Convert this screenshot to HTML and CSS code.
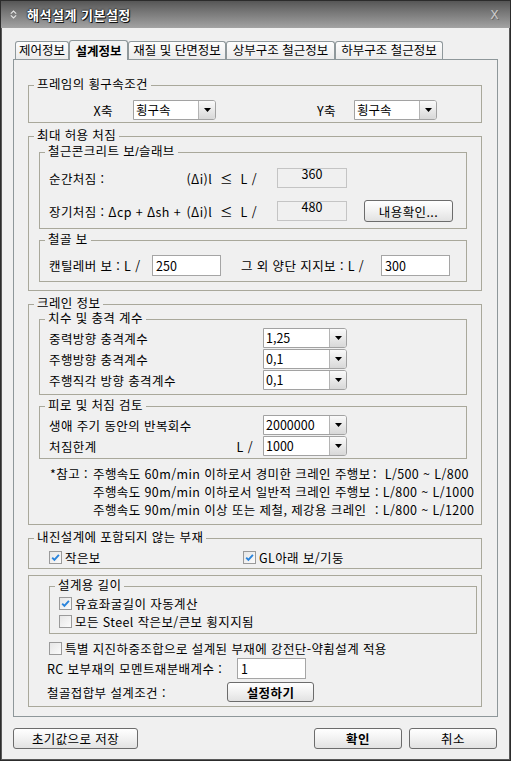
FILE: index.html
```html
<!DOCTYPE html>
<html lang="ko">
<head>
<meta charset="utf-8">
<title>해석설계 기본설정</title>
<link rel="stylesheet" href="styles.css">
</head>
<body>
<div class="window">
  <div class="titlebar">
    <svg class="ticon" width="7" height="9" viewBox="0 0 7 9"><path d="M0.8 3.6 L3.5 1 L6.2 3.6 M0.8 5.4 L3.5 8 L6.2 5.4" fill="none" stroke="#e6e6e6" stroke-width="1.1"/></svg>
    <span class="title">해석설계 기본설정</span>
    <span class="close">X</span>
  </div>
  <div class="client">
    <div class="tabs">
      <div class="tab t1">제어정보</div>
      <div class="tab t2 active">설계정보</div>
      <div class="tab t3">재질 및 단면정보</div>
      <div class="tab t4">상부구조 철근정보</div>
      <div class="tab t5">하부구조 철근정보</div>
    </div>
    <div class="panel">
      <fieldset class="group g1">
        <legend>프레임의 횡구속조건</legend>
        <div class="g1-body">
          <span class="lab-x">X축</span>
          <div class="combo w83"><span class="val">횡구속</span><span class="dd"><svg width="7" height="4" viewBox="0 0 7 4"><polygon points="0,0 7,0 3.5,4" fill="#000"/></svg></span></div>
          <span class="lab-y">Y축</span>
          <div class="combo w83"><span class="val">횡구속</span><span class="dd"><svg width="7" height="4" viewBox="0 0 7 4"><polygon points="0,0 7,0 3.5,4" fill="#000"/></svg></span></div>
        </div>
      </fieldset>

      <fieldset class="group g2">
        <legend>최대 허용 처짐</legend>
        <div class="g2-body">
          <fieldset class="sub rc">
            <legend>철근콘크리트 보/슬래브</legend>
            <div class="rc-body">
              <div class="rc-row r1">
                <span class="rc-label"><span>순간처짐 :</span><span class="frm">(Δi)l&nbsp; ≤ &nbsp;L /</span></span>
                <span class="ro">360</span>
              </div>
              <div class="rc-row r2">
                <span class="rc-label"><span>장기처짐 : Δcp + Δsh +</span><span class="frm">(Δi)l&nbsp; ≤ &nbsp;L /</span></span>
                <span class="ro">480</span>
                <button class="btn b-check">내용확인...</button>
              </div>
            </div>
          </fieldset>
          <fieldset class="sub st">
            <legend>철골 보</legend>
            <div class="st-body">
              <span class="st-l1">캔틸레버 보 : L /</span>
              <span class="edit">250</span>
              <span class="st-l2">그 외 양단 지지보 : L /</span>
              <span class="edit">300</span>
            </div>
          </fieldset>
        </div>
      </fieldset>

      <fieldset class="group g3">
        <legend>크레인 정보</legend>
        <div class="g3-body">
          <fieldset class="sub cr">
            <legend>치수 및 충격 계수</legend>
            <div class="cr-body">
              <div class="crow"><span class="clabel">중력방향 충격계수</span><div class="combo w84"><span class="val">1,25</span><span class="dd"><svg width="7" height="4" viewBox="0 0 7 4"><polygon points="0,0 7,0 3.5,4" fill="#000"/></svg></span></div></div>
              <div class="crow"><span class="clabel">주행방향 충격계수</span><div class="combo w84"><span class="val">0,1</span><span class="dd"><svg width="7" height="4" viewBox="0 0 7 4"><polygon points="0,0 7,0 3.5,4" fill="#000"/></svg></span></div></div>
              <div class="crow"><span class="clabel">주행직각 방향 충격계수</span><div class="combo w84"><span class="val">0,1</span><span class="dd"><svg width="7" height="4" viewBox="0 0 7 4"><polygon points="0,0 7,0 3.5,4" fill="#000"/></svg></span></div></div>
            </div>
          </fieldset>
          <fieldset class="sub fa">
            <legend>피로 및 처짐 검토</legend>
            <div class="fa-body">
              <div class="crow"><span class="clabel">생애 주기 동안의 반복회수</span><div class="combo w84"><span class="val">2000000</span><span class="dd"><svg width="7" height="4" viewBox="0 0 7 4"><polygon points="0,0 7,0 3.5,4" fill="#000"/></svg></span></div></div>
              <div class="crow"><span class="clabel split"><span>처짐한계</span><span>L /</span></span><div class="combo w84"><span class="val">1000</span><span class="dd"><svg width="7" height="4" viewBox="0 0 7 4"><polygon points="0,0 7,0 3.5,4" fill="#000"/></svg></span></div></div>
            </div>
          </fieldset>
          <div class="notes">
            <span>*참고 :</span><span>주행속도 60m/min 이하로서 경미한 크레인 주행보</span><span>:&nbsp;&nbsp;L/500 ~ L/800</span>
            <span></span><span>주행속도 90m/min 이하로서 일반적 크레인 주행보</span><span class="n2">: L/800 ~ L/1000</span>
            <span></span><span>주행속도 90m/min 이상 또는 제철, 제강용 크레인</span><span class="n2">: L/800 ~ L/1200</span>
          </div>
        </div>
      </fieldset>

      <fieldset class="group g4">
        <legend>내진설계에 포함되지 않는 부재</legend>
        <div class="g4-body">
          <span class="ck-item first"><span class="chk"><svg width="11" height="11" viewBox="0 0 11 11"><path d="M2.2 5.6 L4.4 7.9 L8.9 2.8" fill="none" stroke="#2a84dc" stroke-width="1.9"/></svg></span>작은보</span>
          <span class="ck-item"><span class="chk"><svg width="11" height="11" viewBox="0 0 11 11"><path d="M2.2 5.6 L4.4 7.9 L8.9 2.8" fill="none" stroke="#2a84dc" stroke-width="1.9"/></svg></span>GL아래 보/기둥</span>
        </div>
      </fieldset>

      <div class="g5">
        <fieldset class="sub dl">
          <legend>설계용 길이</legend>
          <div class="dl-body">
            <div class="ck-row"><span class="chk"><svg width="11" height="11" viewBox="0 0 11 11"><path d="M2.2 5.6 L4.4 7.9 L8.9 2.8" fill="none" stroke="#2a84dc" stroke-width="1.9"/></svg></span>유효좌굴길이 자동계산</div>
            <div class="ck-row"><span class="chk"></span>모든 Steel 작은보/큰보 횡지지됨</div>
          </div>
        </fieldset>
        <div class="ck-row special"><span class="chk"></span>특별 지진하중조합으로 설계된 부재에 강전단-약휨설계 적용</div>
        <div class="rc2"><span class="rc2-label">RC 보부재의 모멘트재분배계수 :</span><span class="edit">1</span></div>
        <div class="jt"><span class="jt-label">철골접합부 설계조건 :</span><button class="btn b-set">설정하기</button></div>
      </div>
    </div>
    <div class="bottom">
      <button class="btn b-save">초기값으로 저장</button>
      <button class="btn b-ok">확인</button>
      <button class="btn b-cancel">취소</button>
    </div>
  </div>
</div>
</body>
</html>
```

FILE: styles.css
```css
* { box-sizing: border-box; }
html, body { margin: 0; padding: 0; }
body {
  width: 511px;
  height: 761px;
  overflow: hidden;
  background: #f0f0f0;
  font-family: "Noto Sans CJK KR", "Noto Sans", sans-serif;
  font-size: 12.5px;
  letter-spacing: 0.4px;
  color: #000;
}
.window {
  width: 511px;
  height: 761px;
  border: 1px solid #2c2c2c;
  box-shadow: inset 0 0 0 1px #5a5a5a;
  background: #f0f0f0;
}
.titlebar {
  height: 27px;
  display: flex;
  align-items: center;
  padding-left: 9px;
  background: linear-gradient(to bottom, #565656 0%, #6f6f6f 30%, #8c8c8c 70%, #a3a3a3 100%);
}
.ticon { margin-right: 10px; }
.title {
  font-weight: bold;
  font-size: 13px;
  color: #fff;
  text-shadow: 1px 1px 0 #111, 0 0 2px #000, 0 0 1px #000;
  letter-spacing: 0.5px;
}
.close {
  margin-left: auto;
  margin-right: 11px;
  font-family: "Liberation Sans", sans-serif;
  font-size: 12px;
  color: #cfcfcf;
  text-shadow: 1px 1px 0 #666;
}
.client { padding: 0 12px; }

/* tabs */
.tabs {
  display: flex;
  align-items: flex-start;
  height: 19px;
  margin: 12px 0 0 2px;
}
.tab {
  height: 18px;
  margin-top: 1px;
  border: 1px solid #8f989b;
  border-bottom: none;
  border-radius: 3px 3px 0 0;
  background: linear-gradient(#fdfdfd, #ebebeb);
  text-align: center;
  line-height: 16px;
  font-size: 12.5px;
  letter-spacing: 0;
  white-space: nowrap;
}
.tab.active {
  height: 20px;
  margin-top: 0;
  background: #f3f3f3;
  font-weight: bold;
  line-height: 19px;
  position: relative;
  z-index: 1;
}
.t1 { width: 54px; }
.t2 { width: 59px; }
.t3 { width: 98px; }
.t4 { width: 109px; }
.t5 { width: 108px; }

.panel {
  height: 658px;
  border: 1px solid #8e979a;
  padding: 18px 15px 9px 14px;
  background: #f0f0f0;
}

/* group boxes */
fieldset {
  margin: 0;
  padding: 0;
  min-width: 0;
  border: 1px solid #a9a89b;
}
legend {
  margin-left: 5px;
  padding: 0 3px;
  height: 14px;
  line-height: 14px;
  font-family: "Liberation Sans", "Noto Sans CJK KR", sans-serif;
  white-space: nowrap;
}
.group { width: 454px; }
.g2, .g3, .g4 { margin-top: 6px; }
.sub { width: 428px; margin-left: 10px; }

/* combo */
.combo {
  display: flex;
  height: 20px;
  border: 1px solid #a2a2a2;
  border-radius: 0 3px 3px 0;
  background: #fff;
}
.w83 { width: 83px; }
.w84 { width: 84px; }
.combo .val {
  flex: 1;
  padding-left: 2px;
  line-height: 18px;
  letter-spacing: 0;
  white-space: nowrap;
}
.combo .dd {
  width: 17px;
  display: flex;
  align-items: center;
  justify-content: center;
  border-left: 1px solid #b4b4b4;
  border-radius: 0 2px 2px 0;
  background: linear-gradient(#fafafa, #e9e9e9 50%, #d8d8d8);
}

/* group 1 */
.g1-body {
  display: flex;
  align-items: center;
  padding: 8px 0 2px;
}
.lab-x { width: 104px; text-align: right; padding-right: 20px; }
.lab-y { width: 138px; text-align: right; padding-right: 18px; }

/* group 2 */
.g2-body { padding: 2px 0 8px; }
.rc-body { padding: 9px 0 6px 9px; }
.rc-row { display: flex; align-items: center; }
.r1 { height: 20px; }
.r2 { height: 22px; margin-top: 12px; }
.rc-label {
  width: 208px;
  display: flex;
  justify-content: space-between;
  white-space: nowrap;
}
.ro {
  margin-left: 20px;
  width: 70px;
  height: 20px;
  border: 1px solid #c4c4c4;
  background: #f0f0f0;
  text-align: center;
  line-height: 9px;
  letter-spacing: 0;
  padding-top: 0;
}
.st { margin-top: 4px; }
.st-body {
  display: flex;
  align-items: center;
  padding: 8px 0 5px 9px;
}
.st-l1 { width: 103px; padding-right: 8px; white-space: nowrap; }
.st-l2 { width: 160px; padding-left: 20px; white-space: nowrap; }
.edit {
  width: 69px;
  height: 21px;
  border: 1px solid #a5a5a5;
  background: #fff;
  padding-left: 3px;
  line-height: 19px;
  letter-spacing: 0;
}

/* buttons */
.btn {
  font: inherit;
  letter-spacing: inherit;
  color: #000;
  padding: 0;
  border: 1px solid #6c6c6c;
  border-radius: 3px;
  background: linear-gradient(#ffffff, #f3f3f3 45%, #e2e2e2);
  white-space: nowrap;
}
.b-check { margin-left: 17px; width: 89px; height: 22px; }

/* group 3 */
.g3-body { padding: 1px 0 5px; }
.cr-body { padding: 2px 0 4px 9px; }
.fa { margin-top: 4px; }
.fa-body { padding: 2px 0 2px 9px; }
.crow { display: flex; align-items: center; height: 20px; }
.crow + .crow { margin-top: 1px; }
.clabel { width: 214px; white-space: nowrap; }
.clabel.split { display: flex; justify-content: space-between; padding-right: 10px; }
.notes {
  margin-top: 6px;
  padding-left: 21px;
  display: grid;
  grid-template-columns: 43px 280px auto;
  line-height: 18px;
  white-space: nowrap;
}
.notes .n2 { padding-left: 2px; }

/* checkboxes */
.chk {
  width: 13px;
  height: 13px;
  margin-right: 3px;
  border: 1px solid #9a9a9a;
  background: linear-gradient(135deg, #e6e6e6, #fbfbfb);
  display: inline-flex;
  align-items: center;
  justify-content: center;
  flex: none;
}
.ck-item, .ck-row { display: flex; align-items: center; white-space: nowrap; }
.g4-body { display: flex; padding: 4px 0 3px 20px; }
.ck-item { height: 16px; }
.ck-item.first { width: 194px; }

/* group 5 */
.g5 {
  width: 454px;
  margin-top: 6px;
  border: 1px solid #a9a89b;
  padding: 3px 0 4px 10px;
}
.dl-body { padding: 1px 0 3px 9px; }
.ck-row { height: 18px; }
.special { margin: 5px 0 0 10px; }
.rc2 { display: flex; align-items: center; height: 21px; margin: 1px 0 0 8px; }
.rc2-label { width: 190px; white-space: nowrap; }
.jt { display: flex; align-items: center; height: 20px; margin: 3px 0 0 8px; }
.jt-label { width: 180px; white-space: nowrap; }
.b-set { width: 87px; height: 20px; font-weight: bold; }

/* bottom */
.bottom { display: flex; margin-top: 11px; }
.bottom .btn { height: 21px; }
.b-save { width: 125px; }
.b-ok { width: 88px; margin-left: auto; font-weight: bold; }
.b-cancel { width: 88px; margin-left: 7px; margin-right: 1px; }
```
